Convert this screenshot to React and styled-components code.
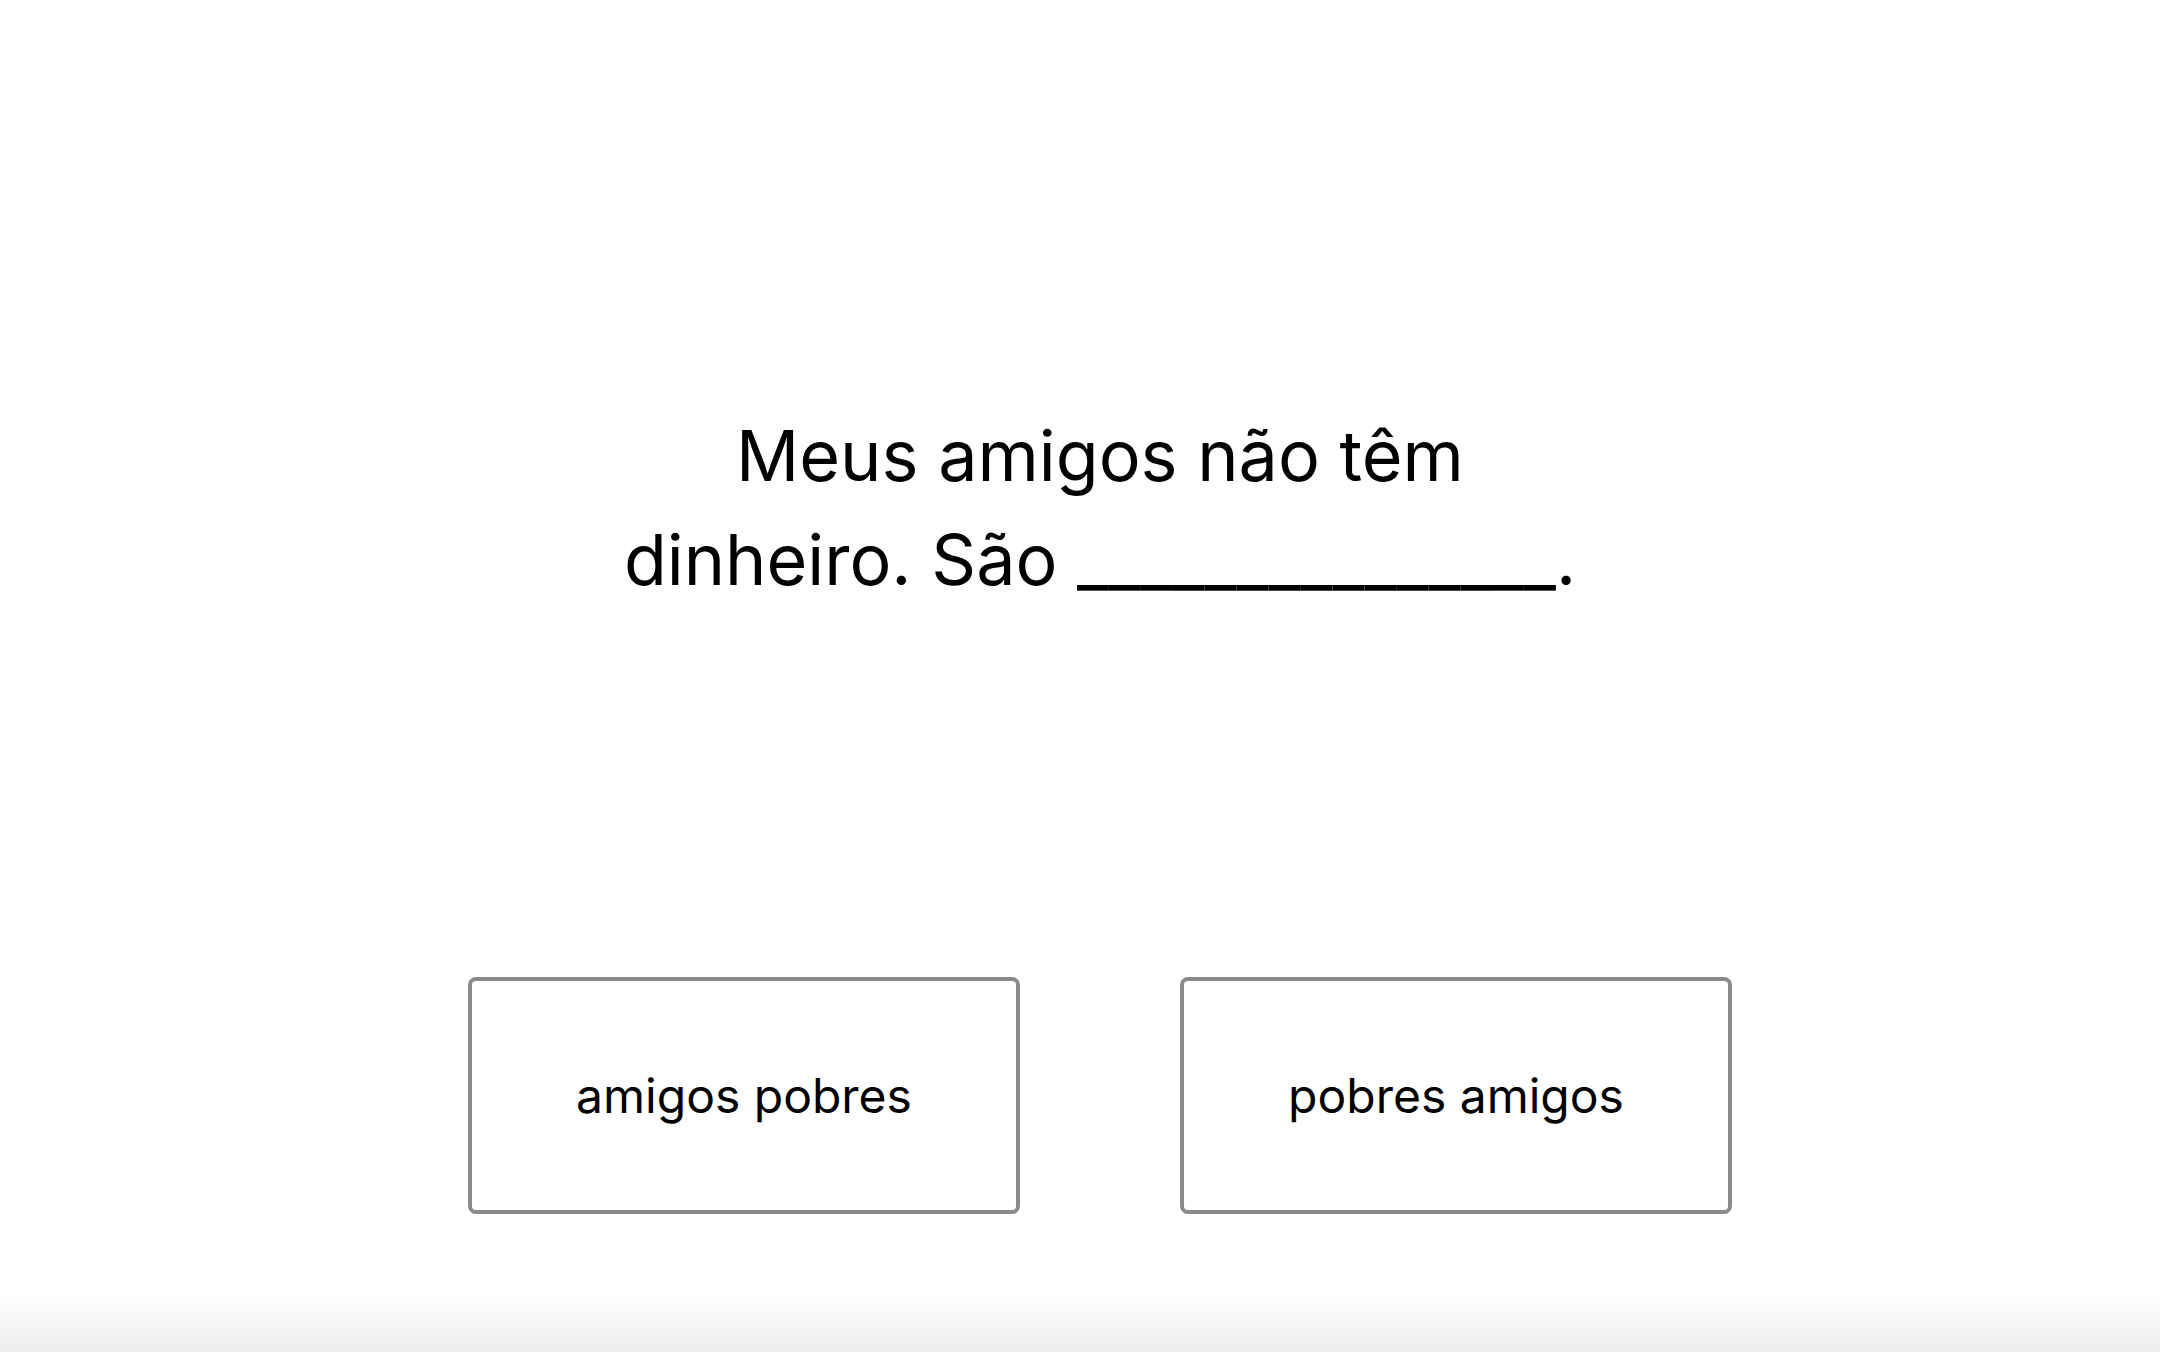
import React from "react";
import styled, { createGlobalStyle } from "styled-components";

const GlobalStyle = createGlobalStyle`
  html, body {
    margin: 0;
    padding: 0;
    background: #ffffff;
  }
  body {
    font-family: Inter, "Noto Sans", sans-serif;
    color: #000;
  }
`;

const Page = styled.div`
  position: relative;
  height: 100vh;
  display: flex;
  flex-direction: column;
  align-items: center;
  padding-left: 40px;
  box-sizing: border-box;
  overflow: hidden;
`;

const Question = styled.p`
  margin: 404px 0 0;
  max-width: 990px;
  text-align: center;
  font-size: 70px;
  line-height: 104px;
  font-weight: 400;
`;

const Options = styled.div`
  display: flex;
  gap: 160px;
  margin-top: 365px;
`;

const Option = styled.button`
  width: 552px;
  height: 237px;
  box-sizing: border-box;
  background: #fff;
  border: 4px solid #8a8a8a;
  border-radius: 8px;
  font-family: Inter, "Noto Sans", sans-serif;
  font-size: 48px;
  color: #000;
  cursor: pointer;
  display: flex;
  align-items: center;
  justify-content: center;
`;

const BottomFade = styled.div`
  position: absolute;
  left: 0;
  right: 0;
  bottom: 0;
  height: 60px;
  background: linear-gradient(to bottom, rgba(238, 238, 238, 0), #ededed);
  pointer-events: none;
`;

const options = ["amigos pobres", "pobres amigos"];

export default function App() {
  return (
    <>
      <GlobalStyle />
      <Page>
        <Question>Meus amigos não têm dinheiro. São _______________.</Question>
        <Options>
          {options.map((o) => (
            <Option key={o}>{o}</Option>
          ))}
        </Options>
        <BottomFade />
      </Page>
    </>
  );
}
